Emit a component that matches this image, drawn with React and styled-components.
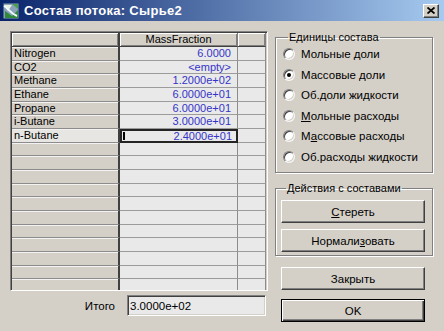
import styled, { createGlobalStyle } from 'styled-components';

const GlobalStyle = createGlobalStyle`
  html, body { margin: 0; padding: 0; }
  body {
    width: 444px;
    height: 331px;
    overflow: hidden;
    background: #d4d0c8;
    font-family: "Liberation Sans", Arial, sans-serif;
    font-size: 11px;
    color: #000;
  }
`;

const components = [
  { name: 'Nitrogen', value: '6.0000' },
  { name: 'CO2', value: '<empty>' },
  { name: 'Methane', value: '1.2000e+02' },
  { name: 'Ethane', value: '6.0000e+01' },
  { name: 'Propane', value: '6.0000e+01' },
  { name: 'i-Butane', value: '3.0000e+01' },
  { name: 'n-Butane', value: '2.4000e+01', active: true },
];

const TOTAL_ROWS = 18;

const units = [
  { label: 'Мольные доли' },
  { label: 'Массовые доли', checked: true },
  { label: 'Об.доли жидкости' },
  { label: 'ольные расходы', key: 'М', pre: '' },
  { label: 'ссовые расходы', key: 'а', pre: 'М' },
  { label: 'Об.расходы жидкости' },
];

const Window = styled.div`
  width: 444px;
  height: 331px;
  display: flex;
  flex-direction: column;
  background: #d4d0c8;
`;

const TitleBar = styled.div`
  height: 21px;
  flex: none;
  display: flex;
  align-items: center;
  gap: 4px;
  padding: 0 5px 0 3px;
  background: linear-gradient(to right, #0a246a, #a6caf0);
`;

const Title = styled.div`
  flex: 1;
  color: #fff;
  font-weight: bold;
  font-size: 13px;
  letter-spacing: 0.3px;
`;

const CloseButton = styled.div`
  width: 16px;
  height: 14px;
  box-sizing: border-box;
  background: #d4d0c8;
  border: 1px solid;
  border-color: #fff #404040 #404040 #fff;
  box-shadow: inset -1px -1px #808080;
  display: flex;
  align-items: center;
  justify-content: center;
`;

const Body = styled.div`
  flex: 1;
  display: flex;
  padding: 10px 0 0 10px;
`;

const LeftColumn = styled.div`
  width: 258px;
  display: flex;
  flex-direction: column;
`;

const Table = styled.div`
  width: 258px;
  height: 260px;
  box-sizing: border-box;
  padding: 1px;
  border: 1px solid;
  border-color: #808080 #fff #fff #808080;
  box-shadow: inset 1px 1px #404040, inset -1px -1px #d4d0c8;
  background: #d4d0c8;
  overflow: hidden;
  display: grid;
  grid-template-columns: 108px 118px 28px;
  grid-template-rows: 14px;
  grid-auto-rows: 13.67px;
  align-content: start;
`;

const HeaderCell = styled.div`
  box-sizing: border-box;
  background: #d4d0c8;
  box-shadow: inset 1px 1px #fff, inset -1px -1px #808080;
  border-bottom: 1px solid #404040;
  border-right: ${(p) => (p.$first ? '2px solid #404040' : '1px solid #808080')};
  text-align: center;
  line-height: 13px;
  white-space: nowrap;
  overflow: hidden;
`;

const RowHead = styled.div`
  box-sizing: border-box;
  background: ${(p) => (p.$active ? '#e8e6e2' : '#d4d0c8')};
  box-shadow: inset 0 1px #f4f3f1;
  border-bottom: 1px solid #8c8c8c;
  border-right: 2px solid #404040;
  padding-left: 2px;
  line-height: 12px;
  white-space: nowrap;
  overflow: hidden;
`;

const DataCell = styled.div`
  position: relative;
  box-sizing: border-box;
  background: #e9e9e9;
  border-bottom: 1px solid #9c9c9c;
  border-right: 1px solid #8c8c8c;
  padding-right: 6px;
  text-align: right;
  color: #3434c8;
  line-height: 12px;
  white-space: nowrap;
  overflow: hidden;
  ${(p) => p.$selected && `
    border: 2px solid #242424;
    padding-right: 4px;
    line-height: 10px;
  `}
`;

const Caret = styled.span`
  position: absolute;
  left: 1px;
  top: 1px;
  bottom: 1px;
  width: 2px;
  background: #000;
`;

const TotalRow = styled.div`
  margin-top: 4px;
  display: flex;
  align-items: center;
  justify-content: flex-end;
  gap: 12px;
  padding-right: 2px;
`;

const TotalLabel = styled.span`
  font-size: 11.5px;
`;

const TextBox = styled.div`
  width: 139px;
  height: 21px;
  box-sizing: border-box;
  padding: 1px 2px;
  border: 1px solid;
  border-color: #808080 #fff #fff #808080;
  box-shadow: inset 1px 1px #404040, inset -1px -1px #d4d0c8;
  background: #e9e9e9;
  display: flex;
  align-items: center;
  font-size: 11.5px;
`;

const RightColumn = styled.div`
  width: 158px;
  margin-left: 7px;
  display: flex;
  flex-direction: column;
`;

const Group = styled.fieldset`
  margin: 0;
  margin-top: ${(p) => p.$mt || '0'};
  min-width: 0;
  padding: ${(p) => p.$pad};
  border: 1px solid #808080;
  box-shadow: 1px 1px 0 #fff, inset 1px 1px 0 #fff;
  display: flex;
  flex-direction: column;
`;

const Legend = styled.legend`
  margin-left: 5px;
  padding: 0 1px;
  line-height: 13px;
  font-size: 11px;
`;

const RadioRow = styled.label`
  height: 20.5px;
  display: flex;
  align-items: center;
  gap: 6px;
  font-size: 11.5px;
`;

const RadioDot = styled.span`
  width: 12px;
  height: 12px;
  flex: none;
  box-sizing: border-box;
  border-radius: 50%;
  background: #fff;
  border: 1px solid;
  border-color: #808080 #f4f4f4 #f4f4f4 #808080;
  box-shadow: inset 1px 1px #404040, inset -1px -1px #d4d0c8;
  display: flex;
  align-items: center;
  justify-content: center;
  &::after {
    content: '';
    width: 4px;
    height: 4px;
    border-radius: 50%;
    background: ${(p) => (p.$checked ? '#000' : 'transparent')};
  }
`;

const Key = styled.span`
  text-decoration: underline;
`;

const Button = styled.div`
  width: 144px;
  height: 23px;
  box-sizing: border-box;
  margin-top: ${(p) => p.$mt || '0'};
  margin-left: ${(p) => p.$ml || '0'};
  background: #d4d0c8;
  display: flex;
  align-items: center;
  justify-content: center;
  font-size: 11.5px;
  ${(p) => (p.$default
    ? `border: 1px solid #000;
       box-shadow: inset 1px 1px #fff, inset -1px -1px #404040, inset -2px -2px #808080;`
    : `border: 1px solid;
       border-color: #fff #404040 #404040 #fff;
       box-shadow: inset -1px -1px #808080;`)}
`;

const AppIcon = () => (
  <svg width="17" height="16" viewBox="0 0 17 16">
    <rect x="0.5" y="0.5" width="15" height="15" fill="#8aa2b8" />
    <path d="M1 2 L9 2 L5 8 Z" fill="#e8f0e0" />
    <path d="M2 8 L9 13 L15 7 L15 15 L2 15 Z" fill="#2f8a3a" />
    <path d="M1 3 C6 6, 7 10, 14 13" stroke="#f0f8ff" strokeWidth="2" fill="none" />
    <path d="M9 1 L15 1 L15 6 Z" fill="#4aa050" />
  </svg>
);

const CloseIcon = () => (
  <svg width="8" height="7" viewBox="0 0 8 7">
    <path d="M0.5 0.5 L7.5 6.5 M7.5 0.5 L0.5 6.5" stroke="#000" strokeWidth="1.8" />
  </svg>
);

export default function App() {
  const rows = Array.from({ length: TOTAL_ROWS }, (_, i) => components[i] || null);
  return (
    <Window>
      <GlobalStyle />
      <TitleBar>
        <AppIcon />
        <Title>Состав потока: Сырье2</Title>
        <CloseButton><CloseIcon /></CloseButton>
      </TitleBar>
      <Body>
        <LeftColumn>
          <Table>
            <HeaderCell $first />
            <HeaderCell>MassFraction</HeaderCell>
            <HeaderCell />
            {rows.map((row, i) => [
              <RowHead key={`h${i}`} $active={row?.active}>{row?.name}</RowHead>,
              <DataCell key={`v${i}`} $selected={row?.active}>
                {row?.active && <Caret />}
                {row?.value}
              </DataCell>,
              <DataCell key={`e${i}`} />,
            ])}
          </Table>
          <TotalRow>
            <TotalLabel>Итого</TotalLabel>
            <TextBox>3.0000e+02</TextBox>
          </TotalRow>
        </LeftColumn>
        <RightColumn>
          <Group $pad="0 6px 5px 7px">
            <Legend>Единицы состава</Legend>
            {units.map((u, i) => (
              <RadioRow key={i}>
                <RadioDot $checked={u.checked} />
                <span>
                  {u.key ? <>{u.pre}<Key>{u.key}</Key>{u.label}</> : u.label}
                </span>
              </RadioRow>
            ))}
          </Group>
          <Group $pad="5px 7px 3px 5px" $mt="9px">
            <Legend>Действия с составами</Legend>
            <Button><span><Key>С</Key>тереть</span></Button>
            <Button $mt="6px"><span>Нормали<Key>з</Key>овать</span></Button>
          </Group>
          <Button $mt="11px" $ml="6px">Закрыть</Button>
          <Button $mt="9px" $ml="6px" $default>OK</Button>
        </RightColumn>
      </Body>
    </Window>
  );
}
